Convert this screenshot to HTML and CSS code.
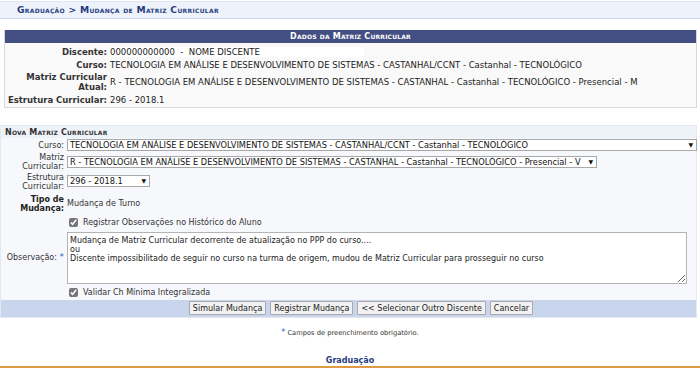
FILE: index.html
```html
<!DOCTYPE html>
<html lang="pt-BR">
<head>
    <meta charset="UTF-8">
    <title>Mudança de Matriz Curricular</title>
    <link rel="stylesheet" href="styles.css">
</head>
<body>

<div class="breadcrumb">Graduação &gt; Mudança de Matriz Curricular</div>

<div class="dados">
    <div class="dados-caption">Dados da Matriz Curricular</div>
    <div class="dados-body">
        <div class="dados-label">Discente:</div>
        <div class="dados-value"><span class="box">000000000000 &nbsp;- &nbsp;NOME DISCENTE</span></div>

        <div class="dados-label">Curso:</div>
        <div class="dados-value">TECNOLOGIA EM ANÁLISE E DESENVOLVIMENTO DE SISTEMAS - CASTANHAL/CCNT - Castanhal - TECNOLÓGICO</div>

        <div class="dados-label">Matriz Curricular<br>Atual:</div>
        <div class="dados-value">R - TECNOLOGIA EM ANÁLISE E DESENVOLVIMENTO DE SISTEMAS - CASTANHAL - Castanhal - TECNOLÓGICO - Presencial - M</div>

        <div class="dados-label">Estrutura Curricular:</div>
        <div class="dados-value">296 - 2018.1</div>
    </div>
</div>

<form class="formulario">
    <div class="form-caption">Nova Matriz Curricular</div>
    <div class="form-body">
        <label class="form-label">Curso:</label>
        <div class="form-field">
            <span class="select-wrap wide">
                <select><option>TECNOLOGIA EM ANÁLISE E DESENVOLVIMENTO DE SISTEMAS - CASTANHAL/CCNT - Castanhal - TECNOLÓGICO</option></select>
            </span>
        </div>

        <label class="form-label">Matriz<br>Curricular:</label>
        <div class="form-field">
            <span class="select-wrap matriz">
                <select><option>R - TECNOLOGIA EM ANÁLISE E DESENVOLVIMENTO DE SISTEMAS - CASTANHAL - Castanhal - TECNOLÓGICO - Presencial - V</option></select>
            </span>
        </div>

        <label class="form-label">Estrutura<br>Curricular:</label>
        <div class="form-field">
            <span class="select-wrap small">
                <select><option>296 - 2018.1</option></select>
            </span>
        </div>

        <label class="form-label bold">Tipo de<br>Mudança:</label>
        <div class="form-field text">Mudança de Turno</div>

        <div class="form-label"></div>
        <div class="form-field check">
            <input type="checkbox" checked> Registrar Observações no Histórico do Aluno
        </div>

        <label class="form-label">Observação: <span class="required">*</span></label>
        <div class="form-field">
            <textarea>Mudança de Matriz Curricular decorrente de atualização no PPP do curso....
ou
Discente impossibilitado de seguir no curso na turma de origem, mudou de Matriz Curricular para prosseguir no curso</textarea>
        </div>

        <div class="form-label"></div>
        <div class="form-field check">
            <input type="checkbox" checked> Validar Ch Mínima Integralizada
        </div>
    </div>
    <div class="form-buttons">
        <button type="button">Simular Mudança</button>
        <button type="button">Registrar Mudança</button>
        <button type="button">&lt;&lt; Selecionar Outro Discente</button>
        <button type="button">Cancelar</button>
    </div>
</form>

<p class="obrigatorio"><span class="required">*</span> Campos de preenchimento obrigatório.</p>

<div class="rodape">Graduação</div>

</body>
</html>
```

FILE: styles.css
```css
body {
    margin: 0;
    font-family: "DejaVu Sans", Verdana, sans-serif;
    font-size: 8px;
    color: #222;
    background-color: #fff;
}

.breadcrumb {
    margin-top: 1px;
    height: 16px;
    line-height: 16px;
    padding-left: 17px;
    background-color: #eef2fa;
    border-top: 1px solid #dfe6f3;
    border-bottom: 1px solid #c8d5ec;
    font-size: 9.2px;
    font-weight: bold;
    font-variant: small-caps;
    letter-spacing: 0.3px;
    color: #1f3d7f;
}

/* dados da matriz */
.dados {
    margin: 11px 3px 0 4px;
    border: 1px solid #d8d8d8;
    border-top: none;
    background-color: #f9f9f9;
}

.dados-caption {
    height: 13px;
    line-height: 13px;
    background-color: #434f83;
    color: #fff;
    text-align: center;
    font-weight: bold;
    font-variant: small-caps;
    font-size: 8px;
    letter-spacing: 0.2px;
}

.dados-body {
    display: grid;
    grid-template-columns: 102px 1fr;
    column-gap: 3px;
    row-gap: 2.5px;
    padding: 4px 0 2px;
    font-size: 8.5px;
}

.dados-label {
    text-align: right;
    font-weight: bold;
    line-height: 10px;
    color: #333;
}

.dados-value {
    line-height: 10px;
    display: flex;
    align-items: center;
}

.dados-value .box {
    background-color: #fff;
    padding-right: 104px;
}

/* formulario */
.formulario {
    margin: 17px 3px 0 0;
    border: 1px solid #e4e8f0;
    background-color: #f7f8fb;
}

.form-caption {
    height: 12px;
    line-height: 13px;
    padding-left: 4px;
    background-color: #eef2f9;
    font-weight: bold;
    font-variant: small-caps;
    color: #333;
    letter-spacing: 0.2px;
}

.form-body {
    display: grid;
    grid-template-columns: 63px 1fr;
    grid-template-rows: 16px 17px 22px 23px 14px 56px 14px;
    column-gap: 3px;
    align-items: center;
}

.form-label {
    text-align: right;
    color: #333;
    line-height: 9px;
}

.form-label.bold {
    font-weight: bold;
    color: #222;
}

.form-field {
    line-height: 12px;
}

.form-field.text {
    color: #333;
}

.form-field.check {
    display: flex;
    align-items: center;
    gap: 5px;
    padding-left: 2px;
    color: #333;
}

.form-field.check input {
    margin: 0;
    width: 9px;
    height: 9px;
    accent-color: #777;
}

.required {
    color: #2d5fc1;
    font-size: 9px;
}

.select-wrap {
    position: relative;
    display: inline-block;
    vertical-align: middle;
}

.select-wrap select {
    appearance: none;
    -webkit-appearance: none;
    display: block;
    font-family: "DejaVu Sans", Verdana, sans-serif;
    font-size: 8.25px;
    color: #111;
    height: 12px;
    line-height: 10px;
    padding: 0 12px 0 2px;
    border: 1px solid #a8a8a8;
    border-radius: 0;
    background-color: #fff;
    width: 100%;
}

.select-wrap::after {
    content: "\25BC";
    position: absolute;
    right: 4px;
    top: 0;
    line-height: 12px;
    font-size: 6px;
    color: #111;
    pointer-events: none;
}

.select-wrap.wide {
    width: 630px;
}

.select-wrap.matriz {
    width: 530px;
}

.select-wrap.small {
    width: 83px;
}

textarea {
    display: block;
    width: 620px;
    height: 52px;
    box-sizing: border-box;
    padding: 3px 2px;
    font-family: "DejaVu Sans", Verdana, sans-serif;
    font-size: 8px;
    line-height: 9px;
    color: #222;
    border: 1px solid #b4b4b4;
    border-radius: 0;
    resize: both;
}

.form-buttons {
    display: flex;
    justify-content: center;
    gap: 4px;
    height: 17px;
    align-items: center;
    padding-left: 25px;
    background-color: #c8d5ec;
}

.form-buttons button {
    font-family: "DejaVu Sans", Verdana, sans-serif;
    font-size: 8px;
    height: 14px;
    padding: 0 3px;
    color: #222;
    background-color: #f1f1f1;
    border: 1px solid #a9a9a9;
    border-radius: 1px;
}

.obrigatorio {
    margin: 10px 0 0;
    line-height: 9px;
    text-align: center;
    font-size: 6.7px;
    color: #333;
}

.obrigatorio .required {
    font-size: 8px;
}

.rodape {
    margin-top: 18px;
    line-height: 10px;
    text-align: center;
    font-weight: bold;
    font-size: 8px;
    color: #1f3d7f;
    border-bottom: 3px solid #df9a45;
    box-shadow: 0 1px 0 #555;
}
```
